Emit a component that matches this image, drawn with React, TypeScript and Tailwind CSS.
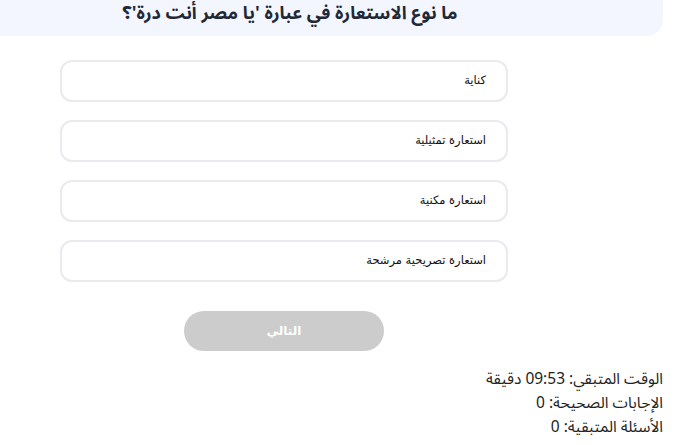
const options = [
  'كناية',
  'استعارة تمثيلية',
  'استعارة مكنية',
  'استعارة تصريحية مرشحة',
];

export default function App() {
  return (
    <div className="w-[676px] h-[445px] overflow-hidden bg-white">
      <div className="w-[663px]">
        {/* question header */}
        <div className="h-[36px] bg-[#f3f6fe] rounded-br-[16px] pt-[1px]">
          <h2
            dir="rtl"
            className="w-[580px] text-center text-[18px] leading-[24px] font-bold text-[#1f2937] [font-family:'Noto_Sans_Arabic','Noto_Sans',sans-serif]"
          >
            ما نوع الاستعارة في عبارة 'يا مصر أنت درة'؟
          </h2>
        </div>

        {/* answers */}
        <div className="ml-[60px] mr-auto mt-[24px] w-[448px] flex flex-col gap-[18px]">
          {options.map((opt) => (
            <button
              key={opt}
              dir="rtl"
              className="h-[42px] w-full rounded-[12px] border-2 border-[#e8eaee] bg-white px-[20px] text-right text-[11.5px] text-[#111] [font-family:'DejaVu_Sans',sans-serif]"
            >
              {opt}
            </button>
          ))}
        </div>

        {/* next */}
        <div className="ml-[184px] mt-[29px]">
          <button
            disabled
            className="h-[40px] w-[200px] rounded-full bg-[#cccccc] text-[12px] font-bold text-white [font-family:'DejaVu_Sans',sans-serif]"
          >
            التالي
          </button>
        </div>

        {/* stats */}
        <div
          dir="rtl"
          className="mt-[16px] flex flex-col text-[15.5px] leading-[24px] text-[#222] [font-family:'Noto_Sans_Arabic','Noto_Sans',sans-serif]"
        >
          <p>الوقت المتبقي: 09:53 دقيقة</p>
          <p>الإجابات الصحيحة: 0</p>
          <p>الأسئلة المتبقية: 0</p>
        </div>
      </div>
    </div>
  );
}
